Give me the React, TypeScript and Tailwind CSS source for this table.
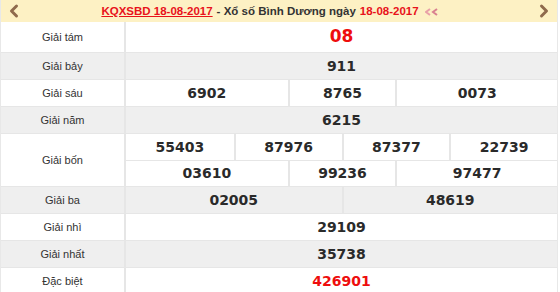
import { ChevronLeft, ChevronRight } from "lucide-react";

const rows: { label: string; cells: { v: string; span: string }[][]; tall?: boolean; red?: boolean }[] = [
  { label: "Giải tám", cells: [[{ v: "08", span: "col-span-8" }]], tall: true, red: true },
  { label: "Giải bảy", cells: [[{ v: "911", span: "col-span-8" }]] },
  {
    label: "Giải sáu",
    cells: [[
      { v: "6902", span: "col-span-3" },
      { v: "8765", span: "col-span-2" },
      { v: "0073", span: "col-span-3" },
    ]],
  },
  { label: "Giải năm", cells: [[{ v: "6215", span: "col-span-8" }]] },
  {
    label: "Giải bốn",
    cells: [
      [
        { v: "55403", span: "col-span-2" },
        { v: "87976", span: "col-span-2" },
        { v: "87377", span: "col-span-2" },
        { v: "22739", span: "col-span-2" },
      ],
      [
        { v: "03610", span: "col-span-3" },
        { v: "99236", span: "col-span-2" },
        { v: "97477", span: "col-span-3" },
      ],
    ],
  },
  {
    label: "Giải ba",
    cells: [[
      { v: "02005", span: "col-span-4" },
      { v: "48619", span: "col-span-4" },
    ]],
  },
  { label: "Giải nhì", cells: [[{ v: "29109", span: "col-span-8" }]] },
  { label: "Giải nhất", cells: [[{ v: "35738", span: "col-span-8" }]] },
  { label: "Đặc biệt", cells: [[{ v: "426901", span: "col-span-8" }]], red: true },
];

export default function App() {
  return (
    <div className="w-[560px] h-[292px] overflow-hidden bg-white font-['Liberation_Sans',Arial,sans-serif]">
      <div className="w-[558px] border-x border-[#e8e8e8]">
        <div className="h-[22px] bg-[#fdf1c4] flex items-center">
          <div className="w-[26px] h-[22px] shrink-0 flex items-center justify-center">
            <ChevronLeft size={20} strokeWidth={3.6} color="#8f6a4c" />
          </div>
          <div className="flex-1 text-[11.5px] font-bold text-[#333] flex items-center justify-center gap-[4px] pt-[1px] pr-[16px]">
            <span className="text-[#e8121b] underline">KQXSBD 18-08-2017</span>
            <span>- Xổ số Bình Dương ngày</span>
            <span className="text-[#e8121b]">18-08-2017</span>
            <svg width="16" height="8" viewBox="0 0 16 8" className="ml-[2px]">
              <path d="M5 1 L1 4 L5 7" fill="none" stroke="#e8a0a8" strokeWidth="2" />
              <path d="M12 1 L8 4 L12 7" fill="none" stroke="#d98090" strokeWidth="2" />
            </svg>
          </div>
          <div className="w-[26px] h-[22px] shrink-0 flex items-center justify-center">
            <ChevronRight size={20} strokeWidth={3.6} color="#8f6a4c" />
          </div>
        </div>
        {rows.map((r, i) => (
          <div
            key={r.label}
            className={`flex border-b border-[#e6e6e6] ${i % 2 === 1 ? "bg-[#efefef]" : "bg-white"}`}
          >
            <div className="w-[125px] shrink-0 border-r-2 border-[#e6e6e6] flex items-center justify-center text-[11px] text-[#333]">
              {r.label}
            </div>
            <div className="flex-1 flex flex-col">
              {r.cells.map((line, j) => (
                <div
                  key={j}
                  className={`grid grid-cols-8 ${r.tall ? "h-[30px]" : "h-[26px]"} ${j > 0 ? "border-t border-[#e6e6e6]" : ""}`}
                >
                  {line.map((c, k) => (
                    <div
                      key={k}
                      className={`${c.span} flex items-center justify-center font-['DejaVu_Sans',sans-serif] font-bold ${
                        r.tall ? "text-[17px]" : "text-[14px]"
                      } ${r.red ? "text-[#ee0d0d]" : "text-[#2a2a2a]"} ${k > 0 ? "border-l-2 border-[#e6e6e6]" : ""}`}
                    >
                      {c.v}
                    </div>
                  ))}
                </div>
              ))}
            </div>
          </div>
        ))}
      </div>
    </div>
  );
}
